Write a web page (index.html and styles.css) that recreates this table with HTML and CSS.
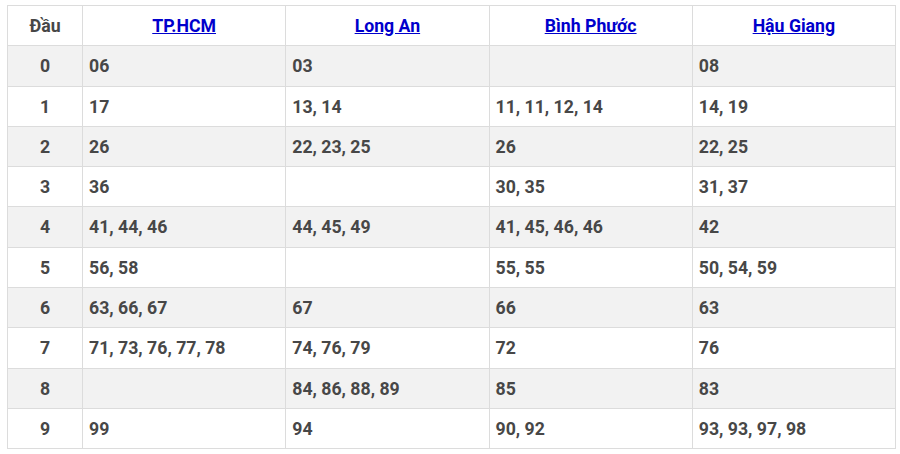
FILE: index.html
```html
<!DOCTYPE html>
<html>
<head>
<meta charset="utf-8">
<link rel="stylesheet" href="styles.css">
</head>
<body>
<table class="kq">
  <colgroup>
    <col class="c-dau">
    <col class="c-prov">
    <col class="c-prov">
    <col class="c-prov">
    <col class="c-prov">
  </colgroup>
  <thead>
    <tr>
      <th>Đầu</th>
      <th><a href="#">TP.HCM</a></th>
      <th><a href="#">Long An</a></th>
      <th><a href="#">Bình Phước</a></th>
      <th><a href="#">Hậu Giang</a></th>
    </tr>
  </thead>
  <tbody>
    <tr><td class="d">0</td><td>06</td><td>03</td><td></td><td>08</td></tr>
    <tr><td class="d">1</td><td>17</td><td>13, 14</td><td>11, 11, 12, 14</td><td>14, 19</td></tr>
    <tr><td class="d">2</td><td>26</td><td>22, 23, 25</td><td>26</td><td>22, 25</td></tr>
    <tr><td class="d">3</td><td>36</td><td></td><td>30, 35</td><td>31, 37</td></tr>
    <tr><td class="d">4</td><td>41, 44, 46</td><td>44, 45, 49</td><td>41, 45, 46, 46</td><td>42</td></tr>
    <tr><td class="d">5</td><td>56, 58</td><td></td><td>55, 55</td><td>50, 54, 59</td></tr>
    <tr><td class="d">6</td><td>63, 66, 67</td><td>67</td><td>66</td><td>63</td></tr>
    <tr><td class="d">7</td><td>71, 73, 76, 77, 78</td><td>74, 76, 79</td><td>72</td><td>76</td></tr>
    <tr><td class="d">8</td><td></td><td>84, 86, 88, 89</td><td>85</td><td>83</td></tr>
    <tr><td class="d">9</td><td>99</td><td>94</td><td>90, 92</td><td>93, 93, 97, 98</td></tr>
  </tbody>
</table>
</body>
</html>
```
FILE: styles.css
```css
html, body {
  margin: 0;
  background: #fff;
}
body {
  padding: 5px 4px 0 7px;
  font-family: Roboto, "Liberation Sans", sans-serif;
}
.kq {
  border-collapse: collapse;
  width: 889px;
  table-layout: fixed;
  color: #474747;
  font-size: 17.7px;
  font-weight: bold;
}
.c-dau { width: 75px; }
.kq th, .kq td {
  border: 1px solid #dcdcdc;
  padding: 11px 6px 9px;
  height: 19.3px;
  line-height: 19.3px;
  text-align: left;
}
.kq th {
  text-align: center;
  font-weight: bold;
}
.kq th a {
  color: #0000cc;
  text-decoration: underline;
}
.kq td.d {
  text-align: center;
}
.kq tbody tr:nth-child(odd) td {
  background: #f2f2f2;
}
```
